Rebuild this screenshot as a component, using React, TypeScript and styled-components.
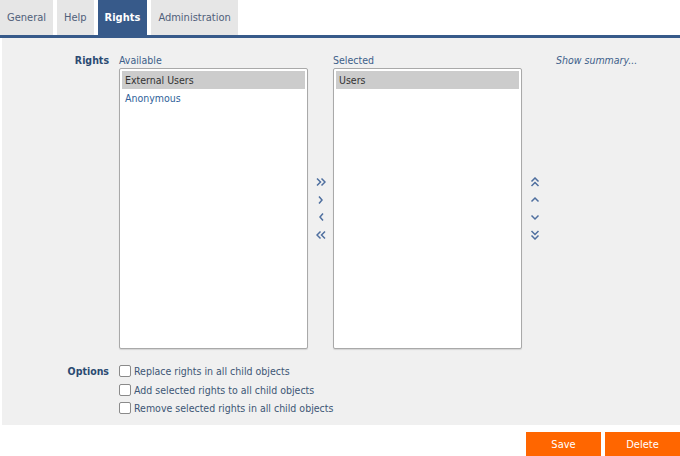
import styled, { createGlobalStyle } from 'styled-components';

const GlobalStyle = createGlobalStyle`
  html, body {
    margin: 0;
    padding: 0;
    background: #ffffff;
    font-family: Tahoma, "DejaVu Sans Condensed", "Liberation Sans", sans-serif;
    font-size: 10.5px;
  }
`;

const tabs = ['General', 'Help', 'Rights', 'Administration'];
const available = ['External Users', 'Anonymous'];
const selected = ['Users'];
const options = [
  'Replace rights in all child objects',
  'Add selected rights to all child objects',
  'Remove selected rights in all child objects',
];

type ChevronKind = 'dright' | 'right' | 'left' | 'dleft' | 'dup' | 'up' | 'down' | 'ddown';

const chevronPaths: Record<ChevronKind, string[]> = {
  right: ['M3 1.5 L6 5 L3 8.5'],
  left: ['M7 1.5 L4 5 L7 8.5'],
  dright: ['M1 1.5 L4.5 5 L1 8.5', 'M5.5 1.5 L9 5 L5.5 8.5'],
  dleft: ['M4.5 1.5 L1 5 L4.5 8.5', 'M9 1.5 L5.5 5 L9 8.5'],
  up: ['M1.5 6.5 L5 3 L8.5 6.5'],
  down: ['M1.5 3.5 L5 7 L8.5 3.5'],
  dup: ['M1.5 4.5 L5 1 L8.5 4.5', 'M1.5 9 L5 5.5 L8.5 9'],
  ddown: ['M1.5 1 L5 4.5 L8.5 1', 'M1.5 5.5 L5 9 L8.5 5.5'],
};

function Chevron({ kind }: { kind: ChevronKind }) {
  return (
    <ArrowButton>
      <svg width="10" height="10" viewBox="0 0 10 10">
        {chevronPaths[kind].map((d) => (
          <path key={d} d={d} fill="none" stroke="#4f6f9f" strokeWidth="1.5" />
        ))}
      </svg>
    </ArrowButton>
  );
}

export default function App() {
  return (
    <>
      <GlobalStyle />
      <Page>
        <TabBar>
          {tabs.map((t) => (
            <Tab key={t} $active={t === 'Rights'}>{t}</Tab>
          ))}
        </TabBar>
        <Panel>
          <FormRow>
            <FieldLabel>Rights</FieldLabel>
            <RightsGrid>
              <ColumnTitle>Available</ColumnTitle>
              <span />
              <ColumnTitle>Selected</ColumnTitle>
              <span />
              <SummaryLink>Show summary...</SummaryLink>

              <ListBox>
                {available.map((a, i) => (
                  <ListItem key={a} $selected={i === 0} $muted={i !== 0}>{a}</ListItem>
                ))}
              </ListBox>
              <ArrowColumn>
                <Chevron kind="dright" />
                <Chevron kind="right" />
                <Chevron kind="left" />
                <Chevron kind="dleft" />
              </ArrowColumn>
              <ListBox>
                {selected.map((s) => (
                  <ListItem key={s} $selected>{s}</ListItem>
                ))}
              </ListBox>
              <ArrowColumn>
                <Chevron kind="dup" />
                <Chevron kind="up" />
                <Chevron kind="down" />
                <Chevron kind="ddown" />
              </ArrowColumn>
              <span />
            </RightsGrid>
          </FormRow>
          <FormRow>
            <FieldLabel>Options</FieldLabel>
            <OptionList>
              {options.map((o) => (
                <OptionItem key={o}>
                  <CheckBox />
                  {o}
                </OptionItem>
              ))}
            </OptionList>
          </FormRow>
        </Panel>
        <Footer>
          <ActionButton>Save</ActionButton>
          <ActionButton>Delete</ActionButton>
        </Footer>
      </Page>
    </>
  );
}

const Page = styled.div`
  width: 680px;
  height: 456px;
  overflow: hidden;
  display: flex;
  flex-direction: column;
`;

const TabBar = styled.div`
  display: flex;
  gap: 4px;
  height: 35px;
  flex-shrink: 0;
  border-bottom: 3px solid #375a8a;
`;

const Tab = styled.div<{ $active?: boolean }>`
  display: flex;
  align-items: center;
  padding: 0 7px 1px 7px;
  font-size: 11px;
  background: ${(p) => (p.$active ? '#375a8a' : '#e6e6e6')};
  color: ${(p) => (p.$active ? '#ffffff' : '#50607a')};
  font-weight: ${(p) => (p.$active ? 'bold' : 'normal')};
`;

const Panel = styled.div`
  background: #f0f0f0;
  height: 387px;
  flex-shrink: 0;
  margin-left: 2px;
  padding-top: 15px;
  box-sizing: border-box;
  display: flex;
  flex-direction: column;
  gap: 15px;
`;

const FormRow = styled.div`
  display: grid;
  grid-template-columns: 107px 1fr;
  column-gap: 10px;
`;

const FieldLabel = styled.div`
  text-align: right;
  font-weight: bold;
  color: #2b4a72;
  line-height: 14px;
`;

const RightsGrid = styled.div`
  display: grid;
  grid-template-columns: 189px 25px 189px 26px auto;
  grid-template-rows: 15px 281px;
`;

const ColumnTitle = styled.div`
  color: #3d5f8a;
  line-height: 14px;
`;

const SummaryLink = styled.div`
  color: #3d5f8a;
  font-style: italic;
  line-height: 14px;
  padding-left: 8px;
`;

const ListBox = styled.div`
  background: #ffffff;
  border: 1px solid #a9a9a9;
  border-radius: 2px;
  box-shadow: 0 1px 1px rgba(0, 0, 0, 0.12);
  padding: 2px;
`;

const ListItem = styled.div<{ $selected?: boolean; $muted?: boolean }>`
  height: 18px;
  line-height: 18px;
  padding-left: 3px;
  background: ${(p) => (p.$selected ? '#cccccc' : 'transparent')};
  color: ${(p) => (p.$muted ? '#2f5f9a' : '#333333')};
`;

const ArrowColumn = styled.div`
  display: flex;
  flex-direction: column;
  align-items: center;
  justify-content: center;
  gap: 7.5px;
`;

const ArrowButton = styled.div`
  width: 10px;
  height: 10px;
  display: flex;
  cursor: pointer;
`;

const OptionList = styled.div`
  display: flex;
  flex-direction: column;
  gap: 4px;
`;

const OptionItem = styled.label`
  display: flex;
  align-items: center;
  gap: 3px;
  height: 14.5px;
  color: #3d5675;
`;

const CheckBox = styled.span`
  width: 10px;
  height: 10px;
  border: 1px solid #8a8a8a;
  border-radius: 2px;
  background: #ffffff;
  flex-shrink: 0;
`;

const Footer = styled.div`
  display: flex;
  justify-content: flex-end;
  gap: 4px;
  padding-top: 7px;
`;

const ActionButton = styled.button`
  width: 75px;
  height: 27px;
  flex-shrink: 0;
  border: none;
  background: #ff6600;
  color: #ffffff;
  font-family: inherit;
  font-size: 11px;
  padding: 0 0 2px 0;
`;
